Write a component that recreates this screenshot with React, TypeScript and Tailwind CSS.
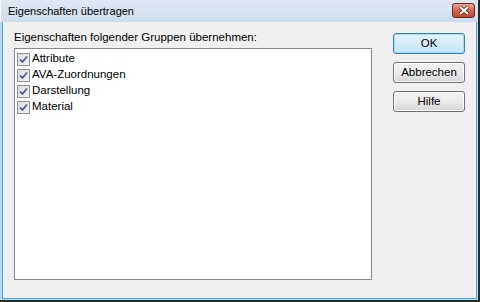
import React from "react";

const items = ["Attribute", "AVA-Zuordnungen", "Darstellung", "Material"];

function CheckBox() {
  return (
    <span className="w-[13px] h-[13px] border border-[#8e8f8f] bg-gradient-to-br from-[#dcdcdc] to-[#f6f6f6] flex items-center justify-center shrink-0">
      <svg width="9" height="9" viewBox="0 0 9 9">
        <path d="M1 4.5 L3.5 7 L8 1.5" fill="none" stroke="#4a5f97" strokeWidth="1.8" />
      </svg>
    </span>
  );
}

function Btn({ label, active }: { label: string; active?: boolean }) {
  return (
    <button
      className={`w-[72px] h-[21px] rounded-[3px] text-[11.5px] text-black flex items-center justify-center ${
        active
          ? "border border-[#3c7fb1] bg-gradient-to-b from-[#e5f4fc] to-[#c4e5f6] shadow-[inset_0_0_0_1px_#9ee0f9]"
          : "border border-[#707070] bg-gradient-to-b from-[#f2f2f2] via-[#ebebeb] to-[#d6d6d6] shadow-[inset_0_0_0_1px_#fcfcfc]"
      }`}
    >
      {label}
    </button>
  );
}

export default function App() {
  return (
    <div
      className="w-[480px] h-[302px] bg-[#c6d6ea] border-b-2 border-r-2 border-[#2a2a2a] flex flex-col"
      style={{ fontFamily: "'Liberation Sans', Arial, sans-serif" }}
    >
      {/* Titelleiste */}
      <div className="h-[22px] flex items-center justify-between pl-[7px] pr-[3px] bg-gradient-to-b from-[#dfe9f5] to-[#cddcee] border-l border-[#f4f7fb]">
        <span className="text-[11px] text-black">Eigenschaften übertragen</span>
        <div className="w-[23px] h-[15px] -mt-[2px] rounded-[3px] border border-[#6d2a22] bg-gradient-to-b from-[#e8a493] via-[#d0654f] to-[#c24a33] flex items-center justify-center">
          <svg width="12" height="9" viewBox="0 0 12 9">
            <path d="M2 1 L10 8 M10 1 L2 8" stroke="#5a2018" strokeWidth="3.2" />
            <path d="M2 1 L10 8 M10 1 L2 8" stroke="#ffffff" strokeWidth="2" />
          </svg>
        </div>
      </div>

      {/* Inhalt */}
      <div className="flex-1 ml-[2px] mr-[1px] mb-[1px] border-l border-r border-b border-[#2fb5e6] bg-[#f0f0f0] flex">
        <div className="flex flex-col pl-[11px] pt-[9px] pb-[18px]">
          <span className="text-[11.5px] text-black leading-[13px] mb-[4px]">
            Eigenschaften folgender Gruppen übernehmen:
          </span>
          <div className="w-[358px] flex-1 bg-white border border-[#828790] flex flex-col pt-[2px] pl-[2px]">
            {items.map((t) => (
              <div key={t} className="h-[16px] flex items-center gap-[2px]">
                <CheckBox />
                <span className="text-[11.5px] text-black">{t}</span>
              </div>
            ))}
          </div>
        </div>
        <div className="flex flex-col gap-[8px] pl-[21px] pt-[11px]">
          <Btn label="OK" active />
          <Btn label="Abbrechen" />
          <Btn label="Hilfe" />
        </div>
      </div>
    </div>
  );
}
